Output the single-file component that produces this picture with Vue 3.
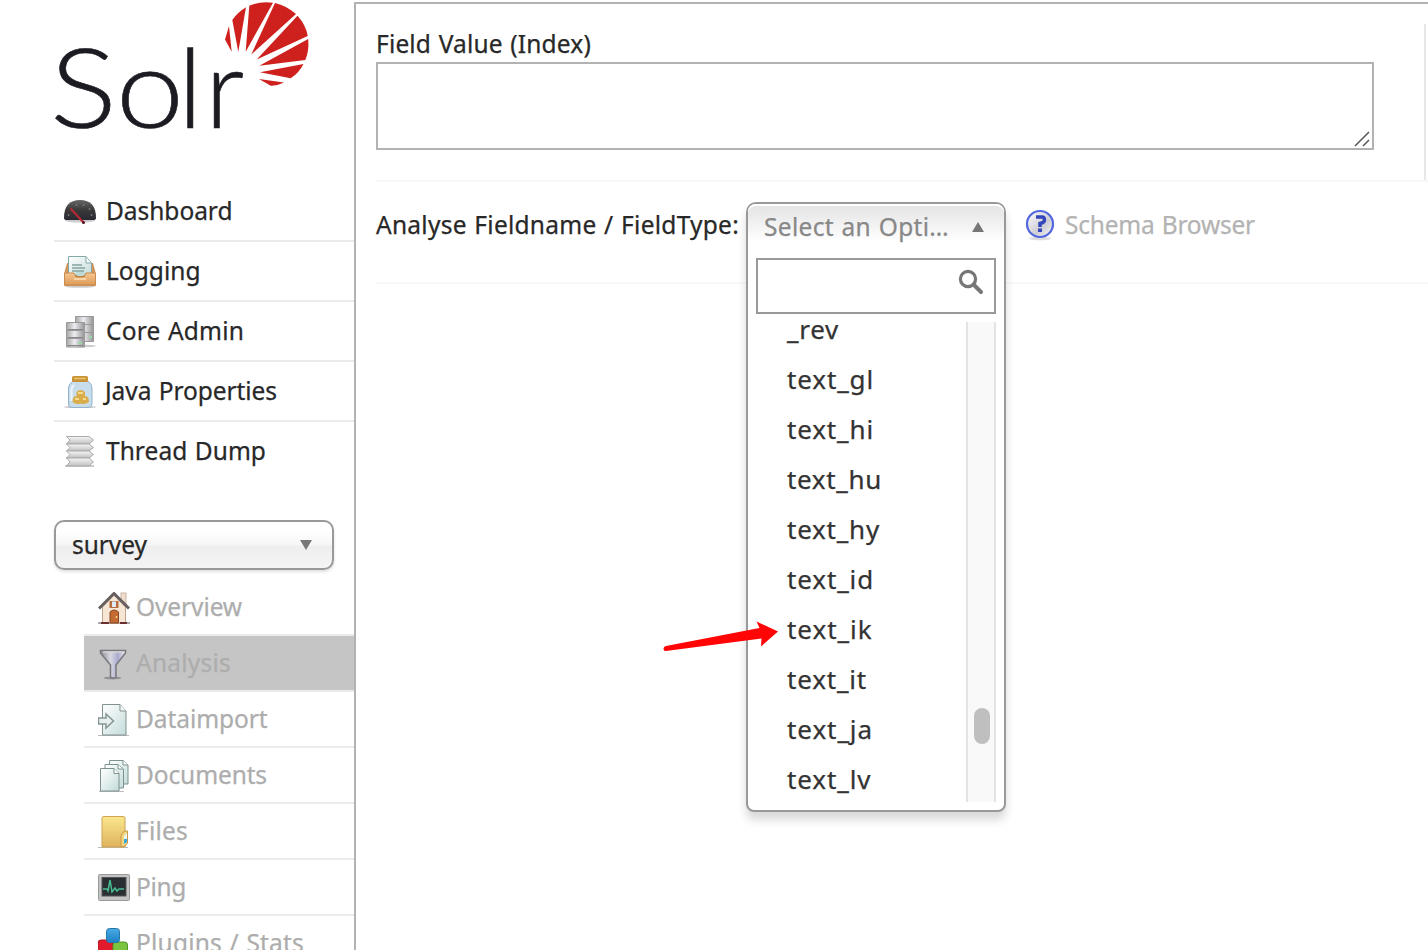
<script setup>
const mainItems = [
  { id: 'dashboard', label: 'Dashboard', width: 126.500 },
  { id: 'logging', label: 'Logging', width: 94.500 },
  { id: 'cores', label: 'Core Admin', width: 138 },
  { id: 'java', label: 'Java Properties', width: 172 },
  { id: 'threads', label: 'Thread Dump', width: 160 },
]
const coreItems = [
  { id: 'overview', label: 'Overview', width: 106 },
  { id: 'analysis', label: 'Analysis', width: 95 },
  { id: 'import', label: 'Dataimport', width: 131.500 },
  { id: 'documents', label: 'Documents', width: 131 },
  { id: 'files', label: 'Files', width: 52 },
  { id: 'ping', label: 'Ping', width: 50 },
  { id: 'plugins', label: 'Plugins / Stats', width: 168 },
]
const activeId = 'analysis'
const options = [
  { label: '_rev', width: 52 },
  { label: 'text_gl', width: 87 },
  { label: 'text_hi', width: 87 },
  { label: 'text_hu', width: 95 },
  { label: 'text_hy', width: 93 },
  { label: 'text_id', width: 87 },
  { label: 'text_ik', width: 85.500 },
  { label: 'text_it', width: 80 },
  { label: 'text_ja', width: 86 },
  { label: 'text_lv', width: 84.500 },
]
// Tracks a label so that it takes the given advance width.
const vFit = {
  mounted(el, { value }) {
    const natural = el.getBoundingClientRect().width
    el.style.letterSpacing = `${(value - natural) / el.textContent.length}px`
  },
}
</script>

<template>
  <div class="app">
    <svg class="defs" width="0" height="0">
      <defs>
        <linearGradient id="gDial" x1="0" y1="0" x2="0" y2="1"><stop offset="0" stop-color="#666" /><stop offset=".5" stop-color="#3a3a3a" /><stop offset="1" stop-color="#282832" /></linearGradient>
        <linearGradient id="gTray" x1="0" y1="0" x2="0" y2="1"><stop offset="0" stop-color="#f6c690" /><stop offset="1" stop-color="#dd9a56" /></linearGradient>
        <linearGradient id="gPage" x1="0" y1="0" x2="1" y2="1"><stop offset="0" stop-color="#ffffff" /><stop offset="1" stop-color="#c3dcda" /></linearGradient>
        <linearGradient id="gRack" x1="0" y1="0" x2="1" y2="0"><stop offset="0" stop-color="#a5a5a5" /><stop offset=".45" stop-color="#ececf2" /><stop offset="1" stop-color="#959595" /></linearGradient>
        <linearGradient id="gFolder" x1="0" y1="0" x2="0" y2="1"><stop offset="0" stop-color="#fae78c" /><stop offset="1" stop-color="#dfb35f" /></linearGradient>
        <linearGradient id="gFunnel" x1="0" y1="0" x2="1" y2="0"><stop offset="0" stop-color="#8c8c94" /><stop offset=".4" stop-color="#d8d8e0" /><stop offset=".7" stop-color="#a9a9ce" /><stop offset="1" stop-color="#eee" /></linearGradient>
        <linearGradient id="gPaper" x1="0" y1="0" x2="0" y2="1"><stop offset="0" stop-color="#f6f6f6" /><stop offset="1" stop-color="#c0c0c0" /></linearGradient>
        <linearGradient id="gHelp" x1="0" y1="0" x2="1" y2="1"><stop offset="0" stop-color="#ffffff" /><stop offset=".6" stop-color="#cdcdd4" /><stop offset="1" stop-color="#fafafa" /></linearGradient>
        <linearGradient id="gBlue" x1="0" y1="0" x2="0" y2="1"><stop offset="0" stop-color="#4aabe5" /><stop offset="1" stop-color="#1c80c4" /></linearGradient>
      </defs>
    </svg>

    <aside class="side">
      <svg class="logo" viewBox="0 0 260 136" width="260" height="136">
        <text class="wordmark" y="128"><tspan class="wide" x="-4" textLength="67" lengthAdjust="spacingAndGlyphs">S</tspan><tspan x="62" textLength="68" lengthAdjust="spacingAndGlyphs">o</tspan><tspan x="124">l</tspan><tspan x="151">r</tspan></text>
        <g fill="#ce201c">
          <path d="M175 26L171 39.500L177.700 51.700Z" />
          <path d="M178.300 20Q184 12 192 7.300L184.300 51.700Z" />
          <path d="M195.300 5.700Q206 1 219 2.700L191.700 51.700Z" />
          <path d="M221 2.900Q232.500 5.500 242 14L197.300 54.500Z" />
          <path d="M243.500 15.700Q252 25 253.700 36L202.700 59.500Z" />
          <path d="M254.200 39Q255.300 51 251.300 60L205.300 65.700Z" />
          <path d="M249.500 64Q245 73 236.700 78.300L206 72.300Z" />
          <path d="M230 82.500Q223 86 216.700 85.700L205 79Z" />
        </g>
      </svg>

      <ul class="menu">
        <li v-for="item in mainItems" :key="item.id">
          <svg class="icon" viewBox="0 0 32 32">
            <template v-if="item.id === 'dashboard'">
              <ellipse cx="16" cy="24.500" rx="15" ry="2" fill="#ccc" />
              <path d="M0 22Q0 4 16 4T32 22Q32 24 29 24H3Q0 24 0 22Z" fill="url(#gDial)" />
              <g fill="#777"><circle cx="12.500" cy="9" r="1" /><circle cx="19.500" cy="9" r="1" /><circle cx="25.500" cy="13" r="1" /><circle cx="27.500" cy="19" r="1" /><circle cx="4.500" cy="19" r="1" /></g>
              <path d="M6.500 12.500L20 27" stroke="#b82831" stroke-width="2" />
              <circle cx="19.500" cy="26.500" r="1.500" fill="#501820" />
            </template>
            <template v-else-if="item.id === 'logging'">
              <ellipse cx="16" cy="30.500" rx="15" ry="1.300" fill="#ccc" />
              <path d="M3 7H29L32 18V29Q32 30 31 30H1Q0 30 0 29V18Z" fill="#d49458" />
              <path d="M4 10H28V22H4Z" fill="#b9763d" />
              <path d="M4.500.5H22L27.500 7V19H4.500Z" fill="url(#gPage)" stroke="#83a8a5" />
              <path d="M22 1V7H27" fill="#fff" stroke="#83a8a5" />
              <path d="M8 9H18M8 12H21M8 15H20" stroke="#84a3a0" stroke-width="1.500" />
              <path d="M.5 17H10L12 21H20L22 17H31.500V29H.5Z" fill="url(#gTray)" stroke="#c98b4c" />
              <path d="M11.500 16H21L19.500 20H13Z" fill="#bcdad7" />
              <path d="M10 23H22" stroke="#f9d4a5" stroke-width="2" />
            </template>
            <template v-else-if="item.id === 'cores'">
              <ellipse cx="17" cy="30" rx="15" ry="1.500" fill="#ccc" />
              <g fill="url(#gRack)" stroke="#999">
                <path d="M11.500.5H29.500V8.500H11.500ZM11.500 8.500H29.500V16.500H11.500ZM11.500 16.500H29.500V25.500H11.500Z" />
                <path d="M2.500 6.500H20.500V14.500H2.500ZM2.500 14.500H20.500V22.500H2.500ZM2.500 22.500H20.500V31H2.500Z" />
              </g>
              <path d="M4 13.500H19M4 21.500H19M4 29.500H19" stroke="#888" />
              <path d="M14 27H18M25 21H28" stroke="#9bd6a6" stroke-width="2" />
            </template>
            <template v-else-if="item.id === 'java'">
              <ellipse cx="16" cy="31" rx="16" ry="1" fill="#bbb" />
              <path d="M9 5H24Q28 8 28 12V28Q28 31.500 24 31.500H8Q4.500 31.500 4.500 28V12Q4.500 8 9 5Z" fill="#c8ddec" stroke="#94b2c8" />
              <path d="M10 9Q7.500 11 7.500 14V25" fill="none" stroke="#edf6fc" stroke-width="2" />
              <rect x="8" y="0" width="16" height="6" rx="1.500" fill="#c99335" />
              <path d="M10 2.500H22" stroke="#ebc66e" stroke-width="1.500" />
              <path d="M8.500 26Q8.500 20 12.500 20V16Q16.500 12 21 16V20Q25 20 25 26Q21 29 16.500 27.500Q12 29 8.500 26Z" fill="#d9ad4b" />
              <path d="M14 17H19M11 23H15M19 23H22" stroke="#f4da8d" stroke-width="2" />
            </template>
            <template v-else>
              <path d="M1 30H30" stroke="#ccc" stroke-width="2" />
              <g fill="url(#gPaper)" stroke="#aaa">
                <path d="M2.500.5H25L29.500 4L25 8H2.500L6 4Z" />
                <path d="M2.500 8H25L29.500 11.500L25 15H2.500L6 11.500Z" />
                <path d="M2.500 15H25L29.500 18.500L25 22H2.500L6 18.500Z" />
                <path d="M2.500 22H25L29.500 26L25 30H2.500L6 26Z" />
              </g>
            </template>
          </svg>
          <span v-fit="item.width" class="label" :class="{ tuck: item.id === 'java' }">{{ item.label }}</span>
        </li>
      </ul>

      <div class="core">
        <span v-fit="75" class="label">survey</span>
        <svg width="12" height="10" viewBox="0 0 12 10"><path d="M0 0H12L6 10Z" fill="#777" /></svg>
      </div>

      <ul class="submenu">
        <li v-for="item in coreItems" :key="item.id" :class="{ active: item.id === activeId }">
          <svg class="icon" viewBox="0 0 32 32">
            <template v-if="item.id === 'overview'">
              <path d="M0 31H32" stroke="#aaa" stroke-width="2" />
              <rect x="23" y="1" width="5" height="12" fill="#f0ddce" stroke="#c8b5a6" />
              <path d="M4.500 15L16 3L27.500 15V31H4.500Z" fill="#f6e6d3" stroke="#bba38e" />
              <path d="M1 16.500L16 1.500L31 16.500" fill="none" stroke="#675e60" stroke-width="3" />
              <rect x="11.500" y="9" width="9" height="7" fill="#b96c42" />
              <rect x="14" y="9.500" width="4" height="5.500" fill="#dceafa" />
              <path d="M12 31V20Q16 16 20.500 20V31Z" fill="#c36b32" stroke="#854724" />
              <circle cx="18.500" cy="25" r="1" fill="#ffd684" />
              <path d="M3 31H11M22 31H29" stroke="#6b2e32" stroke-width="2" />
            </template>
            <template v-else-if="item.id === 'analysis'">
              <ellipse cx="14.500" cy="30" rx="9" ry="1.500" fill="#929292" />
              <path d="M2.500 2.500H27.500V5L18 17V29Q15 31 12.500 29V17L2.500 5Z" fill="url(#gFunnel)" stroke="#77777e" stroke-width="1.500" />
              <path d="M5 4H25" stroke="#d5d5d5" stroke-width="1.500" />
            </template>
            <template v-else-if="item.id === 'import'">
              <path d="M0 31.500H31" stroke="#bbb" />
              <path d="M4.500.5H22L28 7V31H4.500Z" fill="url(#gPage)" stroke="#81918f" />
              <path d="M22 .5V7H28" fill="#f4faf9" stroke="#81918f" />
              <path d="M.5 14H8V10L15.500 17L8 24V20H.5Z" fill="#e7f0ef" stroke="#849795" stroke-width="1.500" />
            </template>
            <template v-else-if="item.id === 'documents'">
              <path d="M1 31.500H26" stroke="#bbb" />
              <g fill="url(#gPage)" stroke="#7d9390">
                <path d="M11.500.5H25L30 5V24H11.500Z" />
                <path d="M7 4.500H20L25.500 9V28H7Z" />
                <path d="M2.500 8.500H16L21 13.500V31H2.500Z" />
                <path d="M16 8.500V13.500H21M20 4.500V9H25M25 .5V5H30" fill="#fff" />
              </g>
            </template>
            <template v-else-if="item.id === 'files'">
              <path d="M0 31.500H30" stroke="#bbb" />
              <path d="M4 2Q4 .5 6 .5H25Q27 .5 27 2V31H4Z" fill="url(#gFolder)" stroke="#cfa353" />
              <path d="M23 31V20Q25 14 29.500 15V27Q28 31 23 31Z" fill="#f3d47f" stroke="#c69848" />
              <path d="M26 28V20L29 17V26Z" fill="#eef5f6" />
              <path d="M26 28V23H29V26Z" fill="#38a8df" />
            </template>
            <template v-else-if="item.id === 'ping'">
              <rect x=".5" y="2.500" width="31" height="26" rx="1" fill="#c4c4c4" stroke="#999" />
              <rect x="4" y="5.500" width="24" height="18.500" fill="#292e33" stroke="#555" />
              <path d="M5 17H9L10 19L12 8L14 20L17 16L19 19L21 17H26" fill="none" stroke="#49bd91" stroke-width="1.500" />
            </template>
            <template v-else>
              <rect x="0" y="12" width="15" height="15" rx="3" fill="#e11b2b" stroke="#b41520" />
              <rect x="15" y="14" width="14.500" height="14" rx="3" fill="#7bc43f" stroke="#529527" />
              <rect x="8.500" y=".5" width="13" height="14" rx="3" fill="url(#gBlue)" stroke="#2378ac" />
            </template>
          </svg>
          <span v-fit="item.width" class="label">{{ item.label }}</span>
        </li>
      </ul>
    </aside>

    <main class="content">
      <section class="field">
        <div class="field-inner">
          <span v-fit="215" class="label">Field Value (Index)</span>
          <div class="textarea">
            <svg width="16" height="16" viewBox="0 0 16 16"><path d="M1 15L15 1M9 15L15 9" stroke="#555" stroke-width="1.500" /></svg>
          </div>
        </div>
      </section>
      <section class="analyse">
        <div class="caption"><span v-fit="363" class="label">Analyse Fieldname / FieldType:</span></div>
        <div class="select">
          <div class="dropdown">
            <div class="selected">
              <span v-fit="185" class="label">Select an Opti…</span>
              <svg width="12" height="10" viewBox="0 0 12 10"><path d="M0 10H12L6 0Z" fill="#777" /></svg>
            </div>
            <div class="search">
              <svg width="26" height="26" viewBox="0 0 26 26"><circle cx="10" cy="10" r="7.600" fill="none" stroke="#777" stroke-width="3.200" /><path d="M15.500 15.500L23 23" stroke="#777" stroke-width="4" stroke-linecap="round" /></svg>
            </div>
            <div class="results">
              <ul>
                <li v-for="o in options" :key="o.label"><span v-fit="o.width" class="label">{{ o.label }}</span></li>
              </ul>
              <div class="track"><div class="thumb"></div></div>
            </div>
          </div>
          <svg class="arrow" width="116" height="32" viewBox="0 0 116 32"><path d="M3 26L96.500 8L93.500 1.500L115 11.500L98 26.500L98.500 18.500L3 31Q.5 31 .5 28.500Q.5 26.500 3 26Z" fill="#ff0505" /></svg>
        </div>
        <div class="schema">
          <svg width="32" height="32" viewBox="0 0 32 32">
            <ellipse cx="16" cy="29.500" rx="11" ry="1.800" fill="#ddd" />
            <circle cx="16" cy="15" r="13" fill="url(#gHelp)" stroke="#5267df" stroke-width="2.200" />
            <path d="M12 8H18Q20.500 8 20.500 11Q20.500 13.500 16 14.500V18" fill="none" stroke="#3447ba" stroke-width="3.500" />
            <rect x="14" y="19.500" width="4" height="3.500" fill="#3447ba" />
          </svg>
          <span v-fit="190" class="label">Schema Browser</span>
        </div>
      </section>
    </main>
  </div>
</template>

<style>
body { margin: 0; background: #fff; overflow: hidden; }
</style>

<style scoped>
.app { display: flex; width: 1428px; height: 950px; overflow: hidden; background: #fff; color: #282828; font: 24.5px/34px "Noto Sans", "Open Sans", sans-serif; }
.defs { position: absolute; }
ul { margin: 0; padding: 0; list-style: none; }
.label { display: inline-block; white-space: pre; word-spacing: 1px; -webkit-text-stroke: .25px currentColor; }
.side { width: 300px; flex: none; padding-left: 54px; height: 950px; overflow: hidden; }
.logo { display: block; height: 136px; overflow: visible; }
.wordmark { font: 300 111px/1 Lato, sans-serif; fill: #1c1b22; stroke: #1c1b22; stroke-width: .6px; }
.menu { padding-top: 46px; }
.menu li { box-sizing: border-box; height: 60px; display: flex; align-items: center; padding-left: 10px; border-bottom: 2px solid #ebebeb; }
.menu li:last-child { border-bottom-color: transparent; }
.icon { width: 32px; height: 32px; flex: none; margin: 2px 10px 0 0; }
.tuck { margin-left: -1px; }
.core { box-sizing: border-box; width: 280px; height: 50px; margin-top: 38px; padding: 0 20px 0 16px; display: flex; align-items: center; justify-content: space-between; border: 2px solid #999; border-radius: 10px; background: linear-gradient(#fff 20%, #f6f6f6 50%, #eee 52%, #f4f4f4 100%); box-shadow: 0 2px 3px rgba(0, 0, 0, .12); }
.submenu { margin: 10px 0 0 30px; color: #adadad; }
.submenu li { box-sizing: border-box; height: 56px; display: flex; align-items: center; padding-left: 14px; border-bottom: 2px solid #ebebeb; }
.submenu .icon { margin-right: 6px; }
.submenu .active { background: #c5c5c5; background-clip: padding-box; }
.content { width: 1074px; box-sizing: border-box; height: 948px; margin-top: 2px; padding: 20px 0 0 20px; border: 2px solid #b2b2b2; border-right: 0; border-bottom: 0; }
.field { height: 156px; border-bottom: 2px solid #f8f8f8; }
.field-inner { box-sizing: border-box; width: 1050px; height: 156px; padding-top: 3px; border-right: 2px solid #e8e8e8; }
.field-inner .label { display: block; width: max-content; }
.textarea { box-sizing: border-box; width: 998px; height: 88px; margin-top: 1px; border: 2px solid #b2b2b2; display: flex; align-items: flex-end; justify-content: flex-end; padding: 0 2px 1px 0; }
.analyse { box-sizing: border-box; height: 102px; padding-top: 20px; display: flex; border-bottom: 2px solid #f8f8f8; }
.caption { width: 370px; flex: none; margin-top: 6px; }
.select { width: 260px; height: 50px; position: relative; flex: none; }
.dropdown { position: absolute; left: 0; top: 0; box-sizing: border-box; width: 260px; height: 610px; border: 2px solid #999; border-radius: 10px 10px 8px 8px; background: #fff; box-shadow: 0 8px 10px rgba(0, 0, 0, .15); padding: 0 8px; }
.selected { height: 48px; margin: 0 -8px; padding: 0 20px 2px 16px; box-sizing: border-box; display: flex; align-items: center; justify-content: space-between; color: #888; border-radius: 8px 8px 0 0; background: linear-gradient(#e6e6e6 10%, #fff 78%); box-shadow: inset 0 2px 0 #fff; }
.search { box-sizing: border-box; height: 56px; margin-top: 6px; border: 2px solid #999; padding: 9px 10px 0 0; display: flex; justify-content: flex-end; }
.results { height: 480px; margin-top: 8px; display: flex; justify-content: space-between; overflow: hidden; color: #333; font-size: 26px; }
.results ul { margin-top: -18px; padding-left: 31px; }
.results li { height: 50px; display: flex; align-items: center; }
.track { box-sizing: border-box; width: 30px; height: 480px; background: #f9f9f9; border: 2px solid #e3e3e3; border-width: 0 2px; padding: 386px 6px 0; }
.thumb { width: 16px; height: 36px; border-radius: 8px; background: #bfbfbf; }
.arrow { position: absolute; left: -83px; top: 418px; }
.schema { display: flex; margin-left: 18px; color: #b3b3b3; }
.schema svg { margin: 7px 9px 0 0; }
.schema .label { margin-top: 6px; }
</style>
